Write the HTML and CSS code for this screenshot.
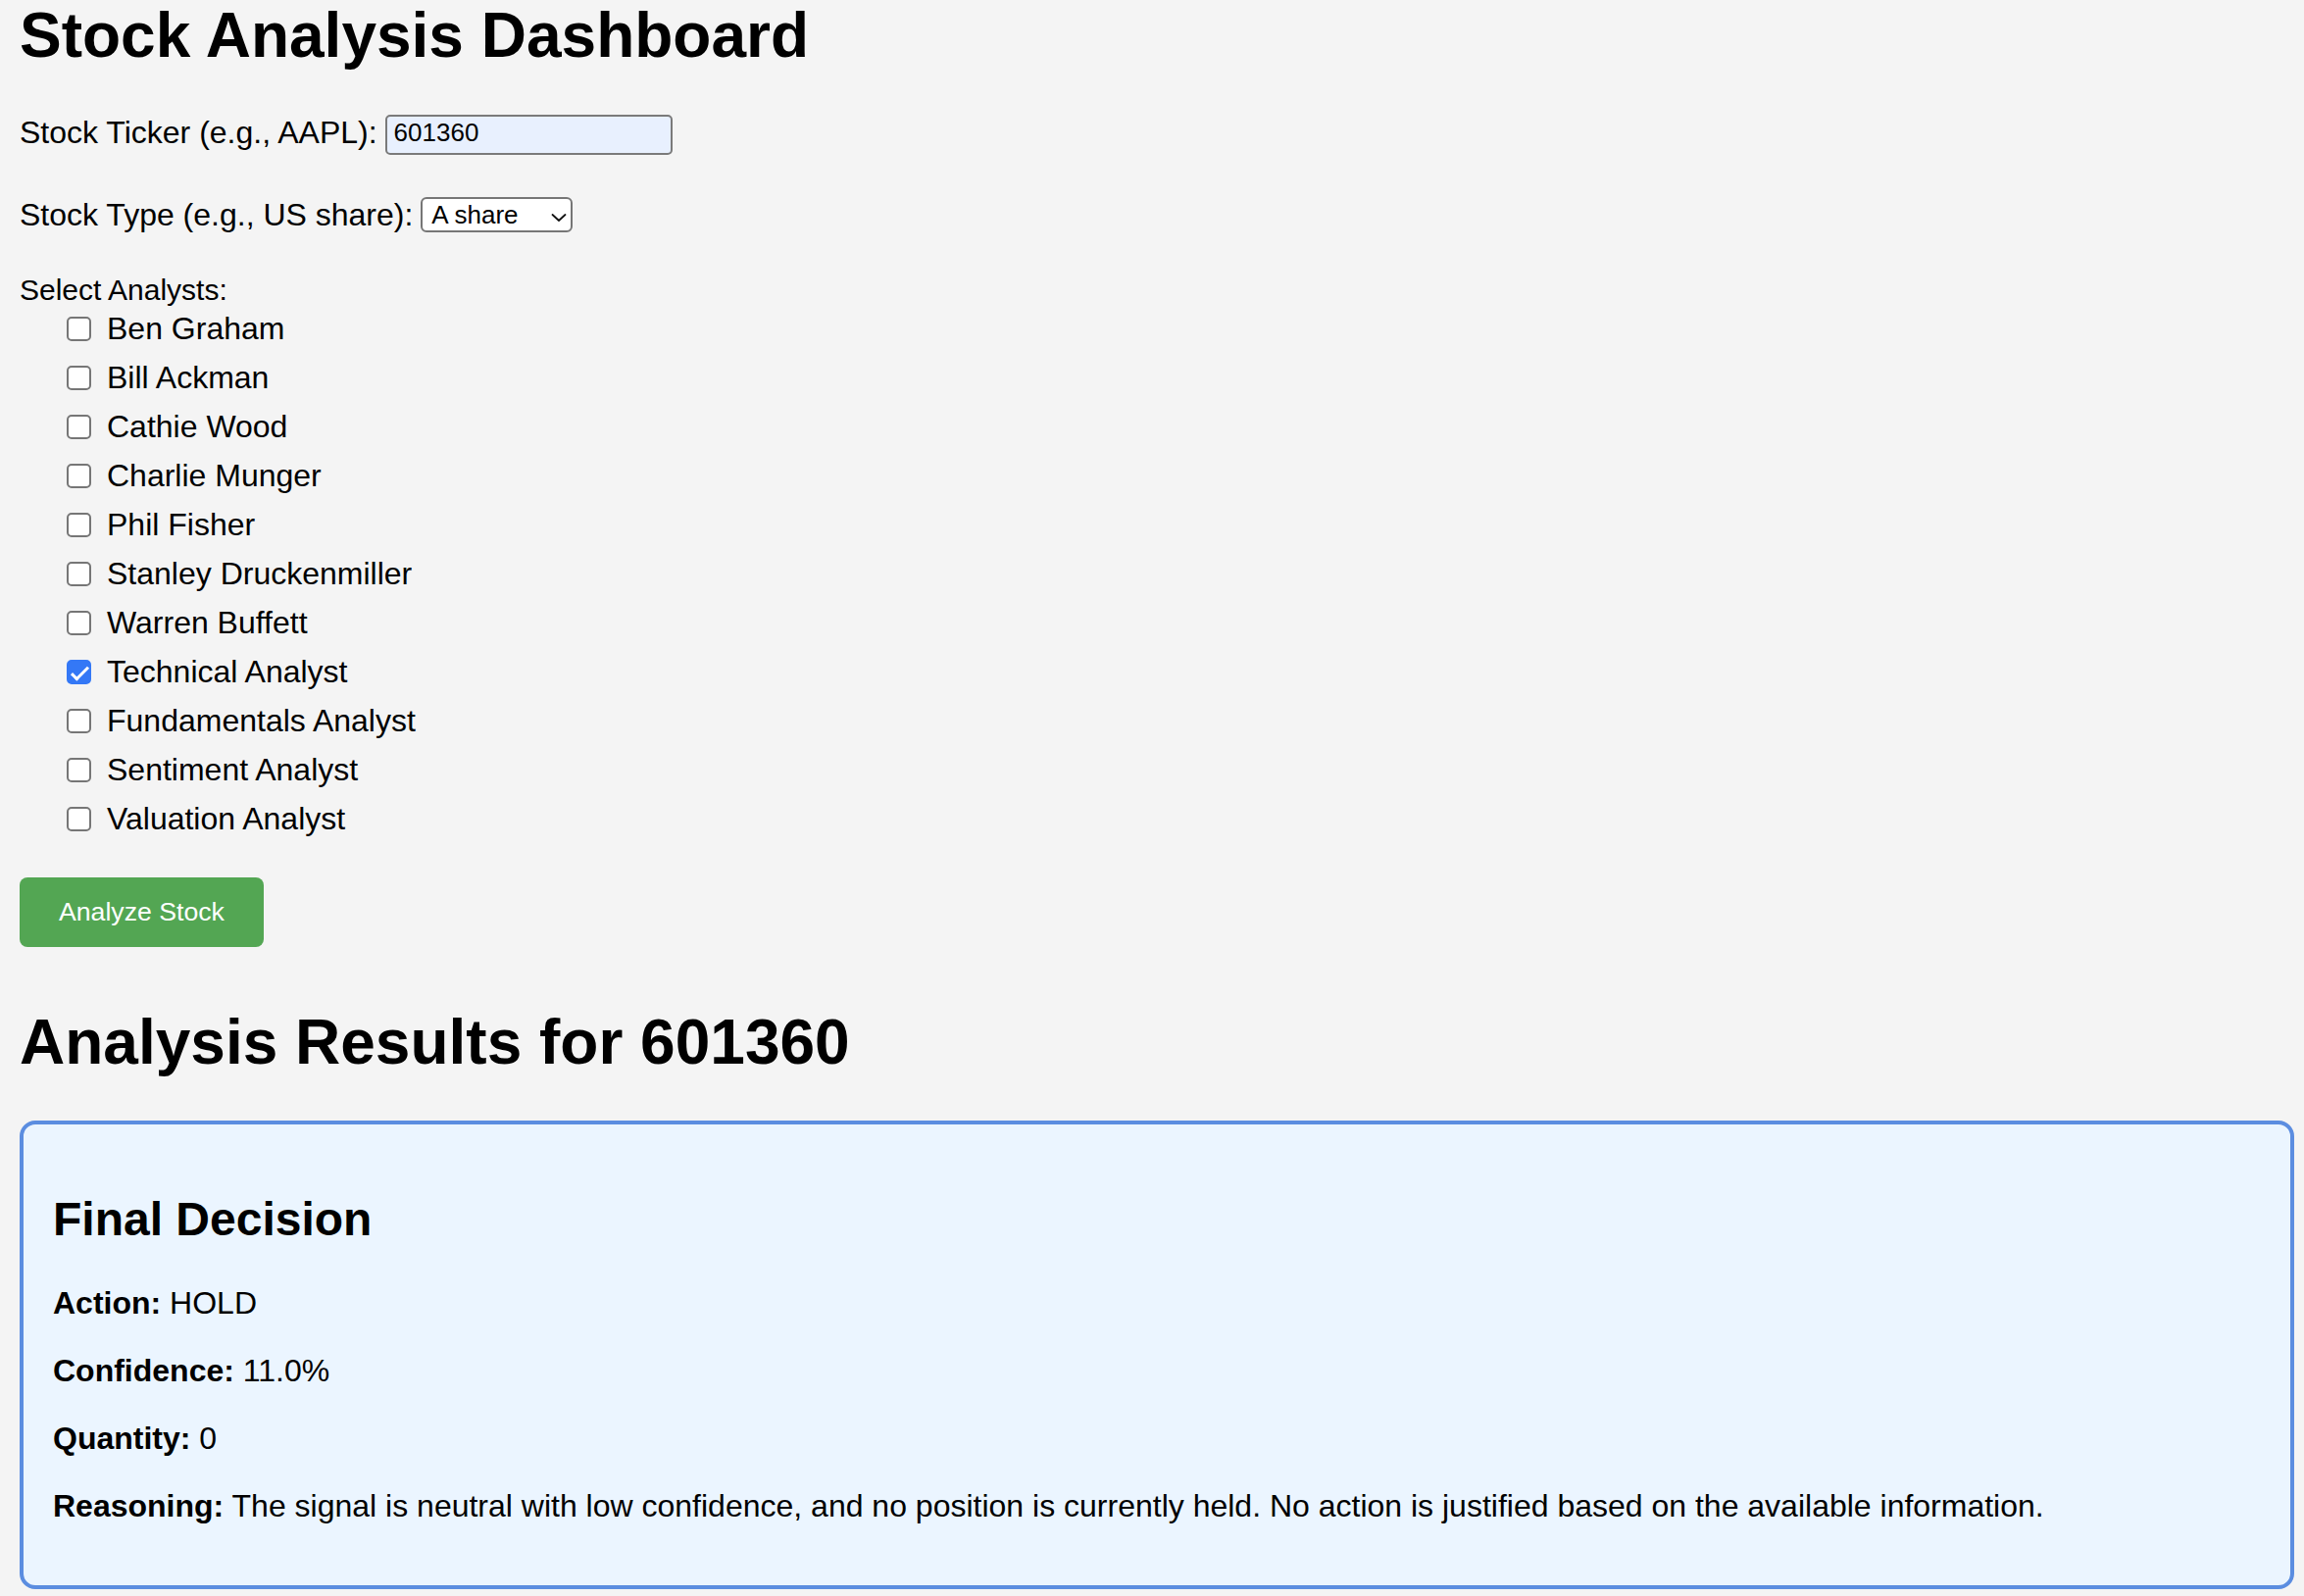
FILE: index.html
```html
<!DOCTYPE html>
<html lang="en">
<head>
<meta charset="utf-8">
<title>Stock Analysis Dashboard</title>
<link rel="stylesheet" href="styles.css">
</head>
<body>
<h1 class="title">Stock Analysis Dashboard</h1>
<form class="form">
  <div class="field field-ticker">
    <label class="field-label" for="ticker">Stock Ticker (e.g., AAPL):</label>
    <input class="text-input" id="ticker" type="text" value="601360">
  </div>
  <div class="field field-type">
    <label class="field-label" for="stype">Stock Type (e.g., US share):</label>
    <div class="select-wrap">
      <select class="select" id="stype">
        <option>A share</option>
        <option>US share</option>
        <option>HK share</option>
      </select>
      <svg class="chevron" width="16" height="8" viewBox="0 0 16 8" aria-hidden="true"><path d="M1.5 1 L8 7 L14.5 1" fill="none" stroke="#111" stroke-width="1.8" stroke-linecap="round" stroke-linejoin="round"/></svg>
    </div>
  </div>
  <div class="analysts-label">Select Analysts:</div>
  <div class="analyst-list">
    <label class="analyst"><input type="checkbox" class="check"><span class="analyst-name">Ben Graham</span></label>
    <label class="analyst"><input type="checkbox" class="check"><span class="analyst-name">Bill Ackman</span></label>
    <label class="analyst"><input type="checkbox" class="check"><span class="analyst-name">Cathie Wood</span></label>
    <label class="analyst"><input type="checkbox" class="check"><span class="analyst-name">Charlie Munger</span></label>
    <label class="analyst"><input type="checkbox" class="check"><span class="analyst-name">Phil Fisher</span></label>
    <label class="analyst"><input type="checkbox" class="check"><span class="analyst-name">Stanley Druckenmiller</span></label>
    <label class="analyst"><input type="checkbox" class="check"><span class="analyst-name">Warren Buffett</span></label>
    <label class="analyst"><input type="checkbox" class="check" checked><span class="analyst-name">Technical Analyst</span></label>
    <label class="analyst"><input type="checkbox" class="check"><span class="analyst-name">Fundamentals Analyst</span></label>
    <label class="analyst"><input type="checkbox" class="check"><span class="analyst-name">Sentiment Analyst</span></label>
    <label class="analyst"><input type="checkbox" class="check"><span class="analyst-name">Valuation Analyst</span></label>
  </div>
  <button type="button" class="btn">Analyze Stock</button>
</form>
<h1 class="results-title">Analysis Results for 601360</h1>
<section class="card">
  <h2 class="card-title">Final Decision</h2>
  <p class="line"><strong>Action:</strong> HOLD</p>
  <p class="line"><strong>Confidence:</strong> 11.0%</p>
  <p class="line"><strong>Quantity:</strong> 0</p>
  <p class="line"><strong>Reasoning:</strong> The signal is neutral with low confidence, and no position is currently held. No action is justified based on the available information.</p>
</section>
</body>
</html>
```

FILE: styles.css
```css
* {
  box-sizing: border-box;
}

html {
  background: #f4f4f4;
}

body {
  margin: 0;
  padding: 0 10px 0 20px;
  background: #f4f4f4;
  color: #000;
  font-family: "Liberation Sans", Arial, Helvetica, sans-serif;
  font-size: 32px;
}

.title {
  font-size: 64px;
  line-height: 72px;
  font-weight: 700;
  margin: 0 0 45px;
}

.form {
  margin: 0;
}

.field {
  display: flex;
  align-items: flex-start;
  gap: 8px;
}

.field-ticker {
  margin-bottom: 43px;
}

.field-type {
  margin-bottom: 42px;
}

.field-label {
  line-height: 36.8px;
}

.text-input {
  width: 293px;
  height: 41px;
  margin: 0;
  padding: 0 7px 5px;
  border: 2px solid #7a7a7a;
  border-radius: 5px;
  background: #e8f0fe;
  color: #000;
  font-family: inherit;
  font-size: 26px;
  outline: none;
}

.select-wrap {
  position: relative;
  height: 36px;
}

.select {
  appearance: none;
  -webkit-appearance: none;
  display: block;
  width: 155px;
  height: 36px;
  margin: 0;
  padding: 0 0 0 9px;
  border: 2px solid #767676;
  border-radius: 6px;
  background: #fff;
  color: #000;
  font-family: inherit;
  font-size: 26px;
  line-height: 32px;
}

.chevron {
  position: absolute;
  left: 133px;
  top: 17px;
  pointer-events: none;
}

.analysts-label {
  font-size: 30px;
  line-height: 32px;
}

.analyst-list {
  display: flex;
  flex-direction: column;
  gap: 6px;
  margin-top: 2px;
}

.analyst {
  display: flex;
  align-items: center;
  height: 44px;
  line-height: 36.8px;
}

.check {
  appearance: none;
  -webkit-appearance: none;
  position: relative;
  flex: none;
  width: 25px;
  height: 25px;
  margin: 0 16px 0 48px;
  border: 2px solid #767676;
  border-radius: 5px;
  background: #fff;
}

.check:checked {
  background: #3478f6;
  border-color: #3478f6;
}

.check:checked::after {
  content: "";
  position: absolute;
  left: 6.7px;
  top: 0.5px;
  width: 9px;
  height: 18px;
  box-sizing: border-box;
  border: solid #fff;
  border-width: 0 3.5px 3.5px 0;
  transform: rotate(45deg);
}

.btn {
  display: block;
  margin: 37px 0 0;
  padding: 20px 40px;
  border: none;
  border-radius: 8px;
  background: #53a653;
  color: #fff;
  font-family: inherit;
  font-size: 26.67px;
  line-height: 30.7px;
}

.results-title {
  font-size: 64px;
  line-height: 72px;
  font-weight: 700;
  margin: 61px 0 44px;
}

.card {
  background: #ebf5ff;
  border: 4px solid #5b8de0;
  border-radius: 16px;
  padding: 30px;
}

.card-title {
  font-size: 48px;
  font-weight: 700;
  line-height: normal;
  margin: 39.8px 0;
}

.line {
  margin: 32px 0;
  line-height: normal;
}
```
